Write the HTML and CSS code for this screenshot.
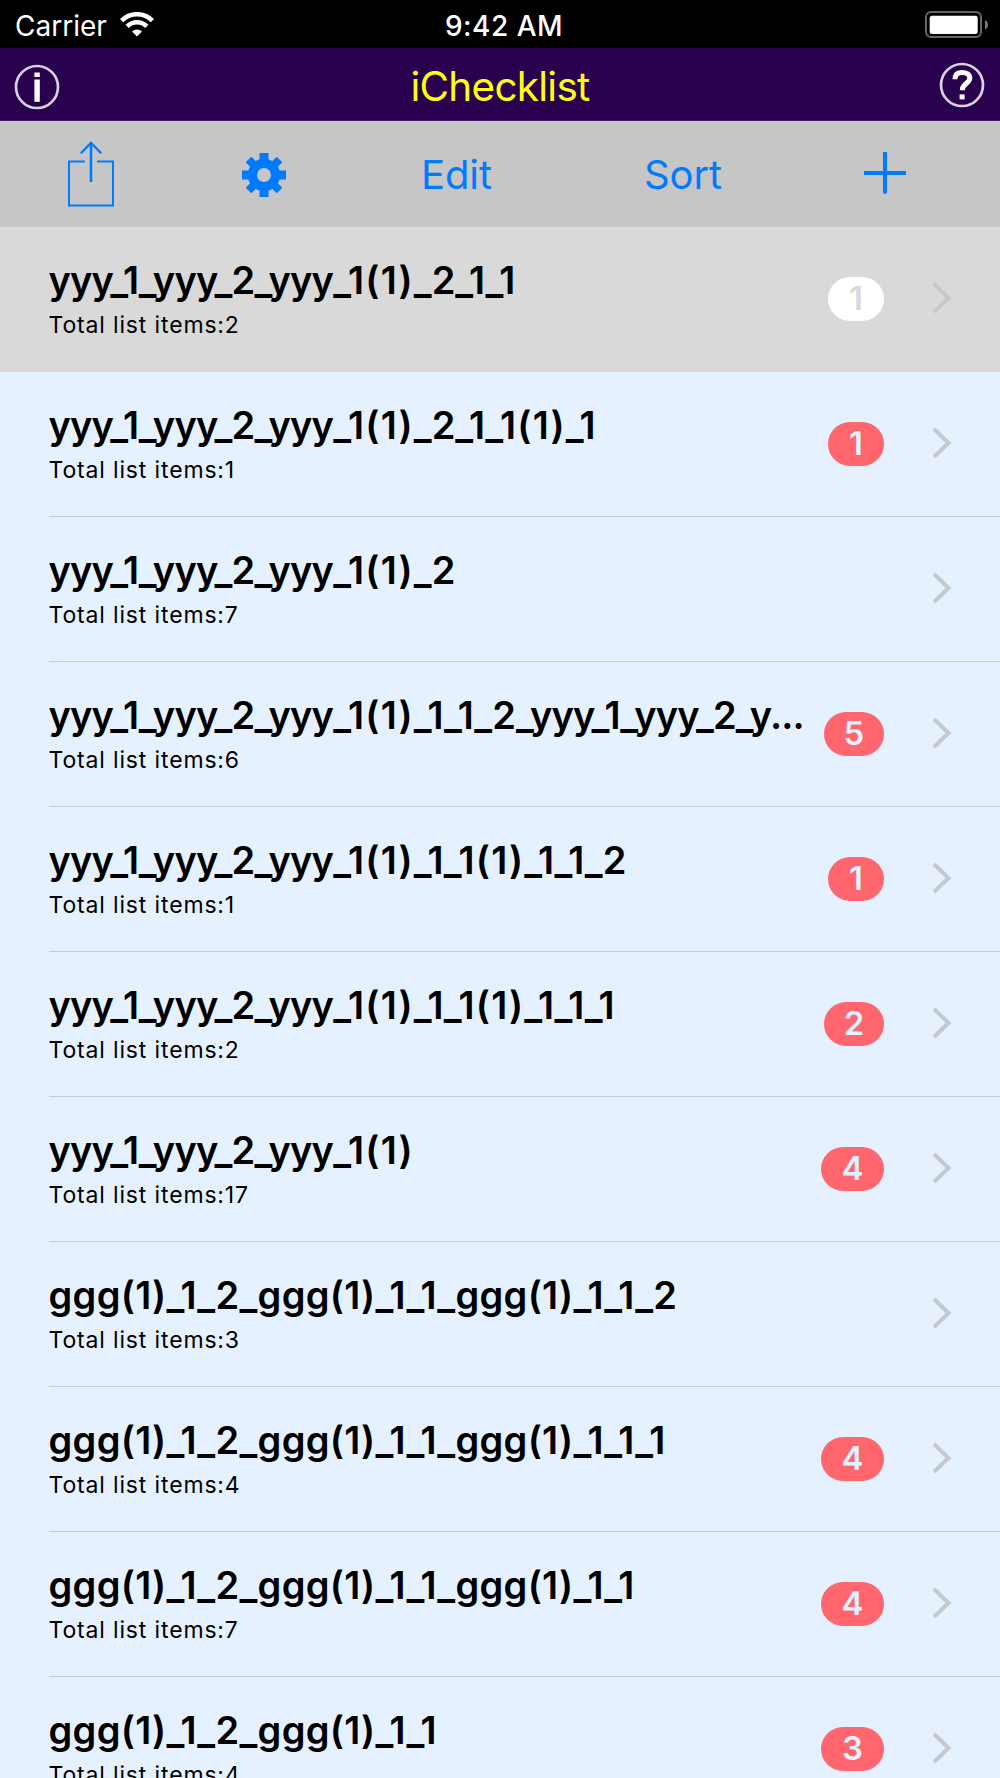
FILE: index.html
```html
<!DOCTYPE html>
<html lang="en">
<head>
    <meta charset="UTF-8">
    <meta name="viewport" content="width=device-width, initial-scale=1.0">
    <title>iChecklist</title>
    <link rel="stylesheet" href="styles.css">
</head>
<body>
    <!-- shared icons -->
    <svg class="defs" width="0" height="0">
        <symbol id="chevron" viewBox="0 0 20 32">
            <path d="M2 2 L16.5 16 L2 30" fill="none" stroke="#c7c7cc" stroke-width="4"/>
        </symbol>
    </svg>

    <div class="status-bar">
        <div class="carrier">
            <span>Carrier</span>
            <svg class="wifi" width="34" height="25" viewBox="0 0 34 25">
                <path d="M1.6 8.6 A21.8 21.8 0 0 1 32.4 8.6" fill="none" stroke="#fff" stroke-width="4.6"/>
                <path d="M7.2 14.4 A13.8 13.8 0 0 1 26.8 14.4" fill="none" stroke="#fff" stroke-width="4.6"/>
                <path d="M17 24.5 L12 19.4 A7.2 7.2 0 0 1 22 19.4 Z" fill="#fff"/>
            </svg>
        </div>
        <div class="time">9:42 AM</div>
        <svg class="battery" width="64" height="28" viewBox="0 0 64 28">
            <rect x="1" y="1" width="55" height="25" rx="5" fill="none" stroke="#666" stroke-width="2"/>
            <rect x="4.7" y="4.7" width="48" height="18.3" rx="2.5" fill="#fff"/>
            <path d="M60 9 Q63 10.5 63 13.7 Q63 17 60 18.5 Z" fill="#777"/>
        </svg>
    </div>

    <div class="nav-bar">
        <svg class="info" width="46" height="46" viewBox="0 0 46 46">
            <circle cx="23" cy="23" r="21" fill="none" stroke="#d9d2e3" stroke-width="2.7"/>
            <rect x="20.4" y="8.5" width="5.4" height="4.5" fill="#fff"/>
            <rect x="20.4" y="15.5" width="5.4" height="22.3" fill="#fff"/>
        </svg>
        <h1>iChecklist</h1>
        <svg class="help" width="46" height="46" viewBox="0 0 46 46">
            <circle cx="23" cy="23" r="21" fill="none" stroke="#d9d2e3" stroke-width="2.7"/>
            <path d="M15.9 17.2 C16 12.5 18.5 10.4 23 10.4 C27.5 10.4 30.8 12.2 30.8 16.2 C30.8 21.2 23.3 21.5 23.3 28.2" fill="none" stroke="#fff" stroke-width="5"/>
            <rect x="20.6" y="32.4" width="5" height="5" fill="#fff"/>
        </svg>
    </div>

    <div class="toolbar">
        <svg class="share" width="46" height="66" viewBox="0 0 46 66" fill="none" stroke="#007aff">
            <path d="M17 20.5 H1 V64.5 H45 V20.5 H29" stroke-width="2"/>
            <path d="M23 2 V41" stroke-width="2.6"/>
            <path d="M12.8 12.2 L23 2 L33.2 12.2" stroke-width="2.3"/>
        </svg>
        <svg class="gear" width="44" height="46" viewBox="0 0 44 46">
            <g stroke="#007aff" stroke-width="9">
                <path d="M22 1 V12 M22 34 V45 M0 23 H11 M33 23 H44"/>
                <path d="M6.5 7.5 L14 15 M30 31 L37.5 38.5 M6.5 38.5 L14 31 M30 15 L37.5 7.5" stroke-width="8"/>
            </g>
            <circle cx="22" cy="23" r="11.6" fill="none" stroke="#007aff" stroke-width="9.2"/>
        </svg>
        <span class="edit">Edit</span>
        <span class="sort">Sort</span>
        <svg class="plus" width="42" height="42" viewBox="0 0 42 42">
            <path d="M21 0 V41.5 M0 21 H42" stroke="#007aff" stroke-width="4"/>
        </svg>
    </div>

    <ul class="list">
        <li class="row selected">
            <div class="text">
                <div class="name"><span class="tight">yyy_1_yyy_2_yyy</span><span class="wide">_1(1)</span>_2_1_1</div>
                <div class="total">Total list items:2</div>
            </div>
            <span class="badge one">1</span>
            <svg class="chevron"><use href="#chevron"/></svg>
        </li>
        <li class="row">
            <div class="text">
                <div class="name"><span class="tight">yyy_1_yyy_2_yyy</span><span class="wide">_1(1)</span>_2_1<span class="wide">_1(1)</span>_1</div>
                <div class="total">Total list items:1</div>
            </div>
            <span class="badge one">1</span>
            <svg class="chevron"><use href="#chevron"/></svg>
        </li>
        <li class="row">
            <div class="text">
                <div class="name"><span class="tight">yyy_1_yyy_2_yyy</span><span class="wide">_1(1)</span>_2</div>
                <div class="total">Total list items:7</div>
            </div>
            <svg class="chevron"><use href="#chevron"/></svg>
        </li>
        <li class="row">
            <div class="text">
                <div class="name"><span class="tight">yyy_1_yyy_2_yyy</span><span class="wide">_1(1)</span>_1_1_2<span class="tight">_yyy_1_yyy_2_y...</span></div>
                <div class="total">Total list items:6</div>
            </div>
            <span class="badge">5</span>
            <svg class="chevron"><use href="#chevron"/></svg>
        </li>
        <li class="row">
            <div class="text">
                <div class="name"><span class="tight">yyy_1_yyy_2_yyy</span><span class="wide">_1(1)</span>_1<span class="wide">_1(1)</span>_1_1_2</div>
                <div class="total">Total list items:1</div>
            </div>
            <span class="badge one">1</span>
            <svg class="chevron"><use href="#chevron"/></svg>
        </li>
        <li class="row">
            <div class="text">
                <div class="name"><span class="tight">yyy_1_yyy_2_yyy</span><span class="wide">_1(1)</span>_1<span class="wide">_1(1)</span>_1_1_1</div>
                <div class="total">Total list items:2</div>
            </div>
            <span class="badge">2</span>
            <svg class="chevron"><use href="#chevron"/></svg>
        </li>
        <li class="row">
            <div class="text">
                <div class="name"><span class="tight">yyy_1_yyy_2_yyy</span><span class="wide">_1(1)</span></div>
                <div class="total">Total list items:17</div>
            </div>
            <span class="badge four">4</span>
            <svg class="chevron"><use href="#chevron"/></svg>
        </li>
        <li class="row">
            <div class="text">
                <div class="name group">ggg(1)_1_2_ggg(1)_1_1_ggg(1)_1_1_2</div>
                <div class="total">Total list items:3</div>
            </div>
            <svg class="chevron"><use href="#chevron"/></svg>
        </li>
        <li class="row">
            <div class="text">
                <div class="name group">ggg(1)_1_2_ggg(1)_1_1_ggg(1)_1_1_1</div>
                <div class="total">Total list items:4</div>
            </div>
            <span class="badge four">4</span>
            <svg class="chevron"><use href="#chevron"/></svg>
        </li>
        <li class="row">
            <div class="text">
                <div class="name group">ggg(1)_1_2_ggg(1)_1_1_ggg(1)_1_1</div>
                <div class="total">Total list items:7</div>
            </div>
            <span class="badge four">4</span>
            <svg class="chevron"><use href="#chevron"/></svg>
        </li>
        <li class="row">
            <div class="text">
                <div class="name group">ggg(1)_1_2_ggg(1)_1_1</div>
                <div class="total">Total list items:4</div>
            </div>
            <span class="badge four">3</span>
            <svg class="chevron"><use href="#chevron"/></svg>
        </li>
    </ul>
</body>
</html>
```
FILE: styles.css
```css
* {
    box-sizing: border-box;
}
body {
    margin: 0;
    height: 1778px;
    overflow: hidden;
    background-color: #e5f1ff;
    font-family: Inter, "Liberation Sans", sans-serif;
    color: #000;
}
svg {
    display: block;
    flex: none;
}
.defs {
    display: none;
}
.status-bar {
    display: grid;
    grid-template-columns: 1fr auto 1fr;
    align-items: center;
    height: 48px;
    padding: 3px 11px 0 15px;
    background-color: #000;
    color: #fff;
    font-size: 28px;
    line-height: 34px;
}
.carrier {
    display: flex;
    gap: 13px;
}
.wifi {
    margin-top: 3px;
}
.time {
    padding-left: 4px;
    font-weight: 500;
    font-size: 28px;
    letter-spacing: 0.5px;
}
.battery {
    justify-self: end;
    margin-top: -1px;
}
.nav-bar {
    display: flex;
    align-items: center;
    justify-content: space-between;
    height: 73px;
    padding: 0 15px 0 14px;
    background-color: #28004d;
    border-bottom: 1px solid #43216a;
}
.nav-bar h1 {
    margin: 5px 0 0 1px;
    font-size: 40.5px;
    font-weight: 400;
    line-height: 48px;
    letter-spacing: -0.75px;
    color: #ffff0a;
}
.info {
    margin-top: 5px;
}
.help {
    margin-top: 2px;
}
.toolbar {
    display: flex;
    align-items: center;
    height: 106px;
    padding-left: 68px;
    background-color: #c6c6c6;
    color: #007aff;
    font-size: 40px;
    line-height: 48px;
}
.share {
    margin-right: 128px;
}
.gear {
    margin-top: 1px;
    margin-right: 135px;
}
.edit,
.sort {
    width: 223px;
    margin-top: 1px;
    letter-spacing: -0.1px;
}
.sort {
    width: 220px;
}
.plus {
    margin-top: -2px;
}
.list {
    margin: 0;
    padding: 0;
    list-style: none;
}
.row {
    display: flex;
    align-items: center;
    height: 144.97px;
    padding-right: 48px;
    background: linear-gradient(#c8cdd2, #c8cdd2) 49px 100% / 100% 1px no-repeat;
}
.row.selected {
    background: #d9d9d9;
}
.text {
    flex: 1;
    min-width: 0;
    margin-top: -3px;
    padding-left: 48.5px;
}
.name {
    font-size: 38px;
    font-weight: 600;
    line-height: 46px;
    white-space: nowrap;
}
.name.group {
    letter-spacing: 0.3px;
}
.tight {
    letter-spacing: -0.8px;
}
.wide {
    letter-spacing: 1.2px;
}
.total {
    font-size: 23px;
    line-height: 28px;
    margin-top: 8px;
    letter-spacing: 0.85px;
}
.badge {
    width: 60px;
    height: 44px;
    margin-right: 48px;
    border-radius: 22px;
    background-color: #ff666d;
    color: #e5f1ff;
    font-size: 33px;
    font-weight: 600;
    line-height: 42px;
    text-align: center;
}
.badge.one {
    width: 56px;
}
.badge.four {
    width: 63px;
}
.selected .badge {
    background-color: #fff;
    color: #d9d9d9;
}
.chevron {
    width: 20px;
    height: 32px;
    margin-top: -2px;
}
```
